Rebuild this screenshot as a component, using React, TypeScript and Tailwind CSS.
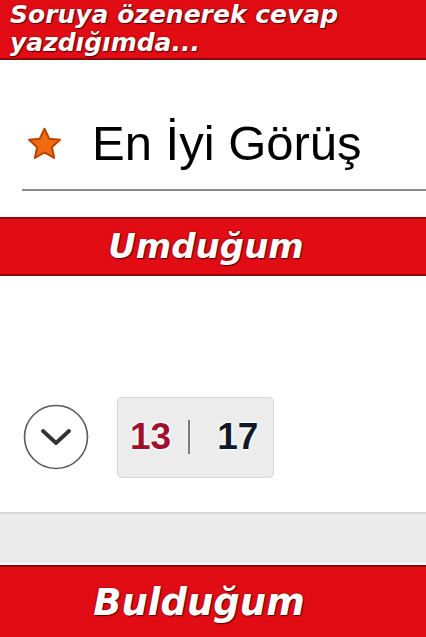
export default function App() {
  const banner =
    "bg-[#e10c14] text-white font-bold italic [font-family:Verdana,'DejaVu_Sans',sans-serif] [text-shadow:1px_1px_1px_#5a0000,0_0_2px_#700]";

  return (
    <div className="w-[426px] h-[637px] overflow-hidden bg-white flex flex-col">
      {/* top caption */}
      <div className={`${banner} h-[60px] shrink-0 overflow-hidden border-b-2 border-[#8c0a0a] px-[10px] pt-[1px] text-[25px] leading-[28px]`}>
        Soruya özenerek cevap yazdığımda...
      </div>

      {/* best answer */}
      <div className="h-[157px] shrink-0 flex flex-col">
        <div className="flex items-center pl-[24px] pt-[59px] gap-[27px]">
          <svg width="41" height="40" viewBox="0 0 24 24">
            <path
              d="M12 2.8l2.8 6 6.5.7-4.9 4.4 1.4 6.5L12 17l-5.8 3.4 1.4-6.5-4.9-4.4 6.5-.7z"
              fill="#f26b10"
              stroke="#b84400"
              strokeWidth="1.2"
              strokeLinejoin="round"
            />
          </svg>
          <span className="text-[49px] leading-none text-black [font-family:Arial,'Liberation_Sans',sans-serif]">
            En İyi Görüş
          </span>
        </div>
        <div className="ml-[22px] mt-[21px] h-[2px] bg-[#8a8a8a]" />
      </div>

      {/* expected */}
      <div className={`${banner} h-[59px] shrink-0 border-y-2 border-[#8c0a0a] flex items-center justify-center pr-[14px] text-[34px]`}>
        Umduğum
      </div>

      {/* votes */}
      <div className="h-[236px] shrink-0 flex items-center pl-[23px] pt-[98px] pb-[12px]">
        <svg width="66" height="66" viewBox="0 0 66 66">
          <circle cx="33" cy="33" r="31.5" fill="none" stroke="#5a5a5a" strokeWidth="1.6" />
          <path d="M20 27l13 12 13-12" fill="none" stroke="#333" strokeWidth="3.8" strokeLinecap="round" strokeLinejoin="round" />
        </svg>
        <div className="ml-[28px] w-[157px] h-[81px] rounded-[5px] bg-[#ececec] border border-[#d6d6d6] flex items-center pl-[12px] text-[37px] font-bold [font-family:Arial,'Liberation_Sans',sans-serif] [text-shadow:0_0_3px_#fff,0_0_3px_#fff,0_0_4px_#e6ffff]">
          <span className="text-[#a0102c]">13</span>
          <span className="ml-[17px] w-[2px] h-[34px] bg-[#7a7a7a] shadow-[0_0_3px_#fff]" />
          <span className="ml-[27px] text-[#111827]">17</span>
        </div>
      </div>

      {/* footer strip */}
      <div className="h-[2px] shrink-0 bg-[#d9d9d9]" />
      <div className="h-[49px] shrink-0 bg-[#ebebeb]" />
      <div className="h-[2px] shrink-0 bg-white" />

      {/* found */}
      <div className={`${banner} flex-1 border-t-2 border-[#8c0a0a] flex justify-center pt-[8px] pr-[28px] text-[37px]`}>
        Bulduğum
      </div>
    </div>
  );
}
